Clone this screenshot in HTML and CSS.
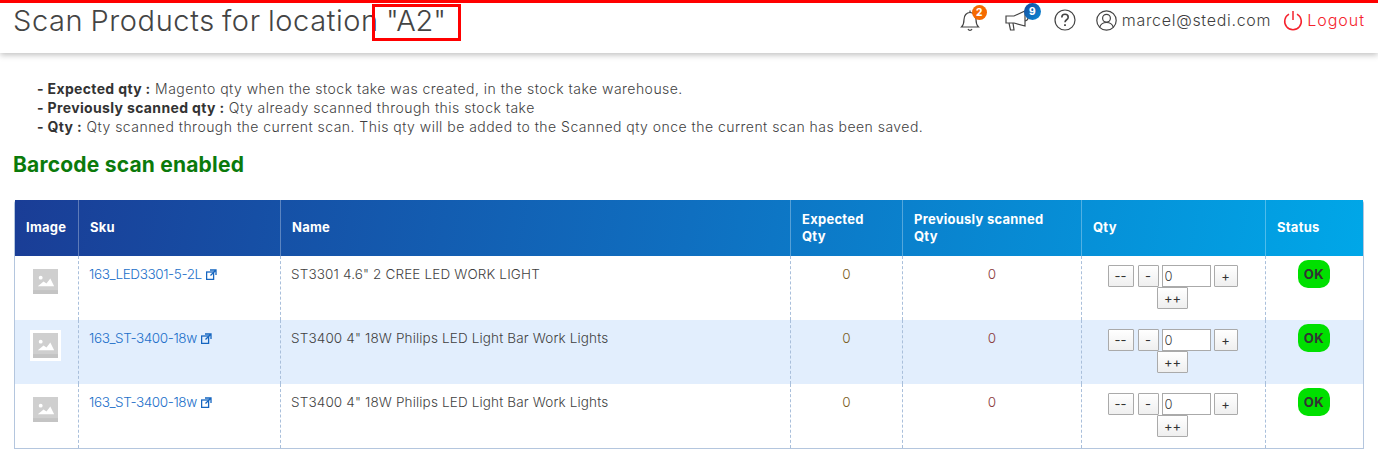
FILE: index.html
```html
<!DOCTYPE html>
<html lang="en">
<head>
    <meta charset="UTF-8">
    <meta name="viewport" content="width=device-width, initial-scale=1.0">
    <title>Scan Products</title>
    <link rel="stylesheet" href="styles.css">
</head>
<body>
    <header class="topbar">
        <h1 class="page-title">Scan Products for location <span class="loc">"A2"</span></h1>
        <div class="red-box"></div>
        <nav class="top-nav">
            <span class="nav-icon">
                <svg width="22" height="24" viewBox="0 0 22 24" fill="none" stroke="#444" stroke-width="1.2"><path d="M1.500 19c2-2 2.500-4 2.500-7.500 0-4 2.500-7 6-7s6 3 6 7c0 3.500.5 5.500 2.500 7.500z"/><path d="M8 21a2.200 2.200 0 0 0 4 0"/><path d="M10 2.500v2"/></svg>
                <span class="badge badge-orange">2</span>
            </span>
            <span class="nav-icon nav-megaphone">
                <svg width="26" height="24" viewBox="0 0 26 24" fill="none" stroke="#444" stroke-width="1.2"><path d="M1 8h8l11-5v15l-11-3H1z"/><path d="M20 7c2 .5 3 1.500 3 3s-1 2.500-3 3"/><path d="M4 15l1.500 7h3.500l-1-7"/></svg>
                <span class="badge badge-blue">9</span>
            </span>
            <span class="nav-icon nav-help">
                <svg width="22" height="22" viewBox="0 0 22 22" fill="none" stroke="#444" stroke-width="1.2"><circle cx="11" cy="11" r="10"/><path d="M7.800 8.500c0-2 1.400-3.200 3.200-3.200s3.200 1.200 3.200 2.900c0 2.600-3.200 2.500-3.200 5" stroke-width="1.600"/><path d="M11 15.200v1.700" stroke-width="1.800"/></svg>
            </span>
            <span class="nav-user">
                <svg width="21" height="21" viewBox="0 0 21 21" fill="none" stroke="#444" stroke-width="1.2"><circle cx="10.500" cy="10.500" r="9.700"/><circle cx="10.500" cy="8.200" r="3.900"/><path d="M3.800 17c1-3 3.500-4.500 6.700-4.500s5.700 1.500 6.700 4.500"/></svg>
                marcel@stedi.com
            </span>
            <span class="nav-logout">
                <svg width="20" height="21" viewBox="0 0 20 21" fill="none" stroke="#f5222d" stroke-width="1.500"><path d="M6 4.200a8.300 8.300 0 1 0 8 0"/><path d="M10 1v9"/></svg>
                Logout
            </span>
        </nav>
    </header>

    <div class="legend">
        <div><b>- Expected qty :</b> Magento qty when the stock take was created, in the stock take warehouse.</div>
        <div><b>- Previously scanned qty :</b> Qty already scanned through this stock take</div>
        <div><b>- Qty :</b> Qty scanned through the current scan. This qty will be added to the Scanned qty once the current scan has been saved.</div>
    </div>

    <h2 class="scan-status">Barcode scan enabled</h2>

    <table class="scan-table">
        <colgroup>
            <col class="col-image">
            <col class="col-sku">
            <col class="col-name">
            <col class="col-expected">
            <col class="col-previous">
            <col class="col-qty">
            <col class="col-status">
        </colgroup>
        <thead>
            <tr>
                <th>Image</th>
                <th>Sku</th>
                <th>Name</th>
                <th>Expected<br>Qty</th>
                <th>Previously scanned<br>Qty</th>
                <th>Qty</th>
                <th>Status</th>
            </tr>
        </thead>
        <tbody>
            <tr>
                <td class="cell-image"><span class="thumb"><svg width="25" height="25" viewBox="0 0 26 26"><rect width="26" height="26" fill="#cfcfcf"/><rect x="0" y="22" width="26" height="4" fill="#c4c4c4"/><circle cx="8" cy="9" r="2" fill="#fff"/><path d="M5 18l6-5 3 2 4-5 4 8z" fill="#fff"/></svg></span></td>
                <td><a class="sku-link">163_LED3301-5-2L</a> <svg class="ext" width="11" height="11" viewBox="0 0 11 11" fill="none" stroke="#1565c0" stroke-width="1.300"><rect x=".6" y="3" width="7" height="7.400"/><path d="M4 1h6v5M9.800 1.200L4.500 6.500"/></svg></td>
                <td class="cell-name">ST3301 4.6" 2 CREE LED WORK LIGHT</td>
                <td class="num num-exp">0</td>
                <td class="num num-prev">0</td>
                <td class="cell-qty"><div class="qty-ctrl"><div class="qty-row"><button class="qty-btn btn-wide">--</button><button class="qty-btn">-</button><input class="qty-input" value="0"><button class="qty-btn btn-plus">+</button></div><button class="qty-btn btn-pp">++</button></div></td>
                <td class="cell-status"><span class="ok">OK</span></td>
            </tr>
            <tr class="alt">
                <td class="cell-image"><span class="thumb thumb-white"><svg width="25" height="25" viewBox="0 0 26 26"><rect width="26" height="26" fill="#cfcfcf"/><rect x="0" y="22" width="26" height="4" fill="#c4c4c4"/><circle cx="8" cy="9" r="2" fill="#fff"/><path d="M5 18l6-5 3 2 4-5 4 8z" fill="#fff"/></svg></span></td>
                <td><a class="sku-link">163_ST-3400-18w</a> <svg class="ext" width="11" height="11" viewBox="0 0 11 11" fill="none" stroke="#1565c0" stroke-width="1.300"><rect x=".6" y="3" width="7" height="7.400"/><path d="M4 1h6v5M9.800 1.200L4.500 6.500"/></svg></td>
                <td class="cell-name">ST3400 4" 18W Philips LED Light Bar Work Lights</td>
                <td class="num num-exp">0</td>
                <td class="num num-prev">0</td>
                <td class="cell-qty"><div class="qty-ctrl"><div class="qty-row"><button class="qty-btn btn-wide">--</button><button class="qty-btn">-</button><input class="qty-input" value="0"><button class="qty-btn btn-plus">+</button></div><button class="qty-btn btn-pp">++</button></div></td>
                <td class="cell-status"><span class="ok">OK</span></td>
            </tr>
            <tr>
                <td class="cell-image"><span class="thumb"><svg width="25" height="25" viewBox="0 0 26 26"><rect width="26" height="26" fill="#cfcfcf"/><rect x="0" y="22" width="26" height="4" fill="#c4c4c4"/><circle cx="8" cy="9" r="2" fill="#fff"/><path d="M5 18l6-5 3 2 4-5 4 8z" fill="#fff"/></svg></span></td>
                <td><a class="sku-link">163_ST-3400-18w</a> <svg class="ext" width="11" height="11" viewBox="0 0 11 11" fill="none" stroke="#1565c0" stroke-width="1.300"><rect x=".6" y="3" width="7" height="7.400"/><path d="M4 1h6v5M9.800 1.200L4.500 6.500"/></svg></td>
                <td class="cell-name">ST3400 4" 18W Philips LED Light Bar Work Lights</td>
                <td class="num num-exp">0</td>
                <td class="num num-prev">0</td>
                <td class="cell-qty"><div class="qty-ctrl"><div class="qty-row"><button class="qty-btn btn-wide">--</button><button class="qty-btn">-</button><input class="qty-input" value="0"><button class="qty-btn btn-plus">+</button></div><button class="qty-btn btn-pp">++</button></div></td>
                <td class="cell-status"><span class="ok">OK</span></td>
            </tr>
        </tbody>
    </table>
</body>
</html>
```

FILE: styles.css
```css
* {
    box-sizing: border-box;
}
html, body {
    height: 449px;
    overflow: hidden;
}
body {
    margin: 0;
    background-color: #fff;
    font-family: "Inter", "Open Sans", sans-serif;
    font-size: 14px;
    color: #3f3f3f;
}
.topbar {
    position: relative;
    display: flex;
    justify-content: space-between;
    height: 53px;
    border-top: 3px solid #f00;
    padding: 0 13px;
    box-shadow: 0 2px 6px rgba(0, 0, 0, 0.25);
}
.page-title {
    margin: 0;
    font-size: 29px;
    font-weight: 300;
    line-height: 36px;
    letter-spacing: 0.6px;
    word-spacing: -1.5px;
    color: #444;
}
.loc {
    letter-spacing: -0.2px;
}
.red-box {
    position: absolute;
    left: 372px;
    top: 1px;
    width: 89px;
    height: 37px;
    border: 3px solid #f00;
}
.top-nav {
    display: flex;
    align-items: center;
    height: 34px;
    font-size: 16px;
    font-weight: 300;
}
.nav-icon {
    position: relative;
    display: flex;
    margin-right: 23px;
}
.nav-help {
    margin-right: 20px;
}
.nav-user, .nav-logout {
    display: flex;
    align-items: center;
    gap: 5px;
    letter-spacing: 0.7px;
}
.nav-logout {
    gap: 4px;
    margin-left: 12px;
    letter-spacing: 1px;
    color: #f5222d;
}
.badge {
    position: absolute;
    top: -3px;
    left: 12px;
    width: 15px;
    height: 15px;
    border-radius: 50%;
    color: #fff;
    font-size: 10px;
    font-weight: 800;
    line-height: 15px;
    text-align: center;
}
.badge-orange {
    background: #f56a00;
}
.badge-blue {
    top: -5px;
    left: 19px;
    width: 17px;
    height: 17px;
    line-height: 17px;
    background: linear-gradient(135deg, #174a9c, #0a8ad6);
}
.legend {
    margin: 26px 0 0 37px;
    font-weight: 300;
    line-height: 19px;
    letter-spacing: 0.47px;
}
.legend b {
    font-weight: 700;
    color: #333;
    letter-spacing: 0.35px;
}
.scan-status {
    margin: 16px 0 0 13px;
    font-size: 21px;
    font-weight: 700;
    line-height: 26px;
    letter-spacing: 0.2px;
    color: #0b7a0b;
}
.scan-table {
    margin: 22px 0 0 14px;
    width: 1350px;
    table-layout: fixed;
    border-collapse: separate;
    border-spacing: 0;
    border: 1px solid #b4c6de;
    border-top: 0;
    border-radius: 4px 4px 0 0;
    font-size: 13.5px;
    font-weight: 300;
}
.col-image { width: 64px; }
.col-sku { width: 202px; }
.col-name { width: 510px; }
.col-expected { width: 112px; }
.col-previous { width: 179px; }
.col-qty { width: 184px; }
.col-status { width: 97px; }
.scan-table thead tr {
    background: linear-gradient(100deg, #1a3d96 0%, #0f6fc0 50%, #00a7e8 100%);
}
.scan-table th {
    height: 56px;
    padding: 0 11px 1px;
    border-right: 1px solid rgba(255, 255, 255, 0.3);
    color: #fff;
    font-size: 13px;
    font-weight: 700;
    line-height: 17px;
    letter-spacing: 0.25px;
    text-align: left;
}
.scan-table th:last-child, .scan-table td:last-child {
    border-right: 0;
}
.scan-table td {
    height: 64px;
    padding: 10px 10px 0;
    border-right: 1px dashed #a9bfdb;
    vertical-align: top;
    line-height: 17px;
}
.cell-name {
    letter-spacing: 0.15px;
}
.alt td {
    background: #e2eefd;
}
.cell-image {
    text-align: center;
}
.scan-table .cell-image {
    padding: 10px 2px 0 0;
}
.thumb {
    display: inline-block;
    padding: 3px;
}
.thumb svg {
    display: block;
}
.thumb-white {
    background: #fff;
}
.sku-link {
    color: #1b6fc9;
    letter-spacing: -0.4px;
}
.ext {
    vertical-align: -1px;
}
.num {
    text-align: center;
}
.num-exp {
    color: #7a5c1e;
}
.num-prev {
    color: #8a3a3a;
}
.scan-table .cell-qty {
    padding: 9px 2px 0 0;
}
.qty-ctrl {
    display: flex;
    flex-direction: column;
    align-items: center;
}
.qty-row {
    display: flex;
}
.qty-btn {
    width: 21px;
    height: 22px;
    padding: 0;
    border: 1px solid #aaa;
    border-radius: 1px;
    background: linear-gradient(#fff, #efefef);
    color: #333;
    font-family: "Inter", sans-serif;
    font-size: 13px;
    line-height: 18px;
}
.btn-wide {
    width: 26px;
    margin-right: 4px;
}
.btn-plus {
    width: 24px;
    margin-left: 3px;
}
.btn-pp {
    width: 31px;
}
.qty-input {
    width: 49px;
    height: 22px;
    margin-left: 3px;
    padding: 0 2px;
    border: 1px solid #aaa;
    background: #fff;
    color: #444;
    font-family: "Inter", sans-serif;
    font-size: 13px;
    font-weight: 300;
}
.scan-table .cell-status {
    padding: 4px 0 0 32px;
}
.ok {
    display: block;
    width: 32px;
    height: 28px;
    border-radius: 10px;
    background: #00e000;
    color: #333;
    font-size: 13px;
    font-weight: 700;
    line-height: 28px;
    letter-spacing: 0.5px;
    text-align: center;
}
```
